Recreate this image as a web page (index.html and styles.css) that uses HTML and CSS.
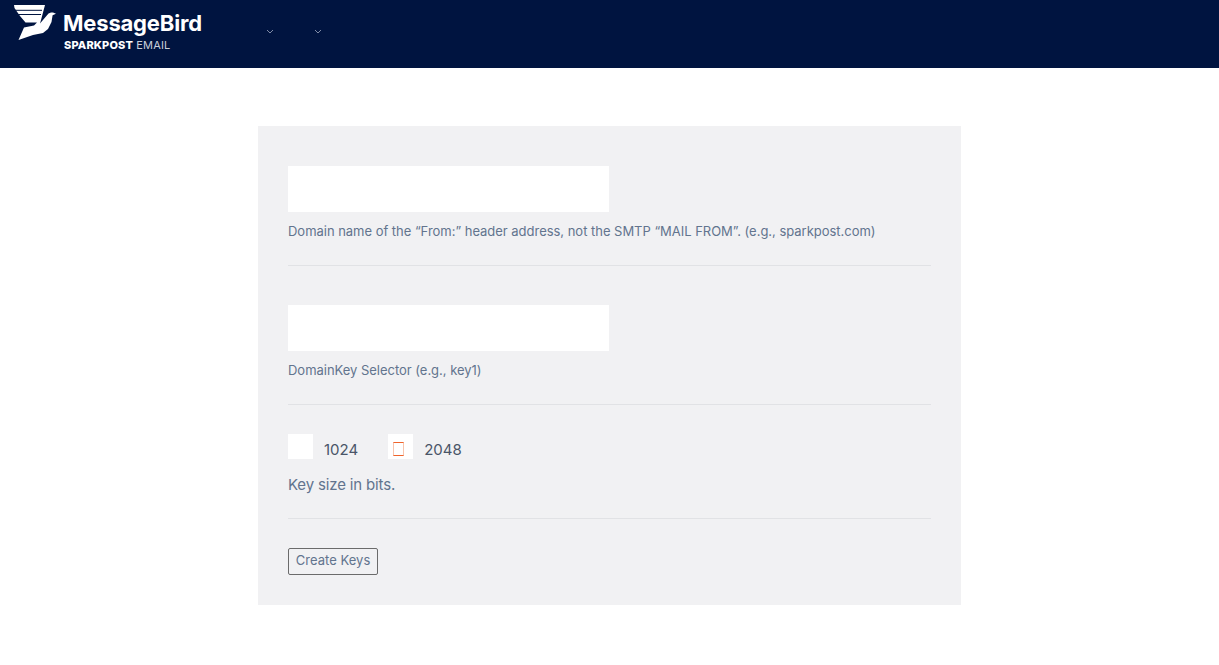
FILE: index.html
```html
<!DOCTYPE html>
<html lang="en">
<head>
<meta charset="utf-8">
<title>Create DKIM Keys</title>
<link rel="stylesheet" href="styles.css">
</head>
<body>
<header class="topbar">
  <div class="brand">
    <svg class="brand-mark" viewBox="0 0 42 36" width="42" height="36" aria-hidden="true">
      <path fill="#fff" d="M0 0H31L27 15L26 18.5L34.5 8.5L37 7.5H39L42 8.8L38.6 10.2L37.5 17L34 24L29 28L19 30L4.5 35L10 22.5L20 20.5L23 17.5H11.5L6 11L2.5 6L0.5 3Z"/>
      <path fill="none" stroke="#001440" d="M1 5.3H28M4 9.5H27"/>
    </svg>
    <div class="brand-text">
      <div class="brand-name">MessageBird</div>
      <div class="brand-sub"><b>SPARKPOST</b> EMAIL</div>
    </div>
  </div>
  <nav class="nav">
    <svg class="chev" viewBox="0 0 8 5" width="8" height="5" aria-hidden="true"><path d="M1 1l3 3 3-3" fill="none" stroke="#7f8ba6"/></svg>
    <svg class="chev" viewBox="0 0 8 5" width="8" height="5" aria-hidden="true"><path d="M1 1l3 3 3-3" fill="none" stroke="#7f8ba6"/></svg>
  </nav>
</header>
<main class="page">
  <form class="panel">
    <section class="field">
      <input class="text-input" type="text" aria-label="Signing domain">
      <p class="help">Domain name of the “From:” header address, not the SMTP “MAIL FROM”. (e.g., sparkpost.com)</p>
    </section>
    <section class="field">
      <input class="text-input" type="text" aria-label="Selector">
      <p class="help">DomainKey Selector (e.g., key1)</p>
    </section>
    <section class="field field-radio">
      <div class="choices">
        <span class="box"></span><span class="choice-label">1024</span>
        <span class="box"><span class="box-mark"></span></span><span class="choice-label">2048</span>
      </div>
      <p class="help-large">Key size in bits.</p>
    </section>
    <button class="submit" type="button">Create Keys</button>
  </form>
</main>
</body>
</html>
```
FILE: styles.css
```css
* { box-sizing: border-box; }
html, body { margin: 0; padding: 0; background: #fff; }
body { font-family: Inter, "Liberation Sans", sans-serif; height: 665px; overflow: hidden; }

.topbar { height: 68px; background: #001440; display: flex; align-items: flex-start; padding: 5px 0 0 14px; }
.brand { display: flex; gap: 7px; width: 252px; }
.brand-mark { display: block; flex: none; }
.brand-text { color: #fff; padding-top: 6px; }
.brand-name { font-family: Inter, sans-serif; font-weight: 700; font-size: 22px; line-height: 25px; letter-spacing: -0.18px; white-space: nowrap; }
.brand-sub { font-family: Inter, sans-serif; font-size: 11px; line-height: 14px; margin: 2px 0 0 1px; color: #c9cfdb; letter-spacing: 0.15px; white-space: nowrap; }
.brand-sub b { color: #fff; font-weight: 800; }
.nav { display: flex; gap: 40px; padding-top: 24px; }
.chev { display: block; }

.page { display: flex; justify-content: center; padding: 58px 0 0 0; }
.panel { width: 703px; height: 479px; background: #f1f1f3; padding: 40px 30px 0; }
.field { height: 100px; border-bottom: 1px solid #e1e2e5; margin-bottom: 39px; }
.field-radio { height: 85px; margin-top: -10px; margin-bottom: 29px; }

.text-input { display: block; width: 321px; height: 46px; border: 0; background: #fff; padding: 0; }
.help { margin: 9px 0 0; font-size: 13px; line-height: 20px; color: #62748e; letter-spacing: -0.025px; white-space: nowrap; }

.choices { display: flex; align-items: center; height: 25px; }
.box { width: 25px; height: 25px; background: #fff; display: flex; align-items: flex-start; padding: 8px 0 0 5px; }
.box-mark { width: 11px; height: 14px; border: 1px solid #f0642c; border-left-color: #f8c5ae; border-right-color: #f8c5ae; }
.choice-label { font-size: 15px; line-height: 20px; color: #4a5568; margin: 6px 30px 0 11px; }
.help-large { margin: 15px 0 0; font-size: 15px; line-height: 22px; color: #62748e; letter-spacing: -0.15px; }

.submit { display: block; width: 90px; height: 27px; padding: 0 0 3px; background: #f1f1f3; border: 1px solid #6b6b6b; border-radius: 2px; font-family: inherit; font-size: 13px; color: #62748e; letter-spacing: 0.03px; }
```
